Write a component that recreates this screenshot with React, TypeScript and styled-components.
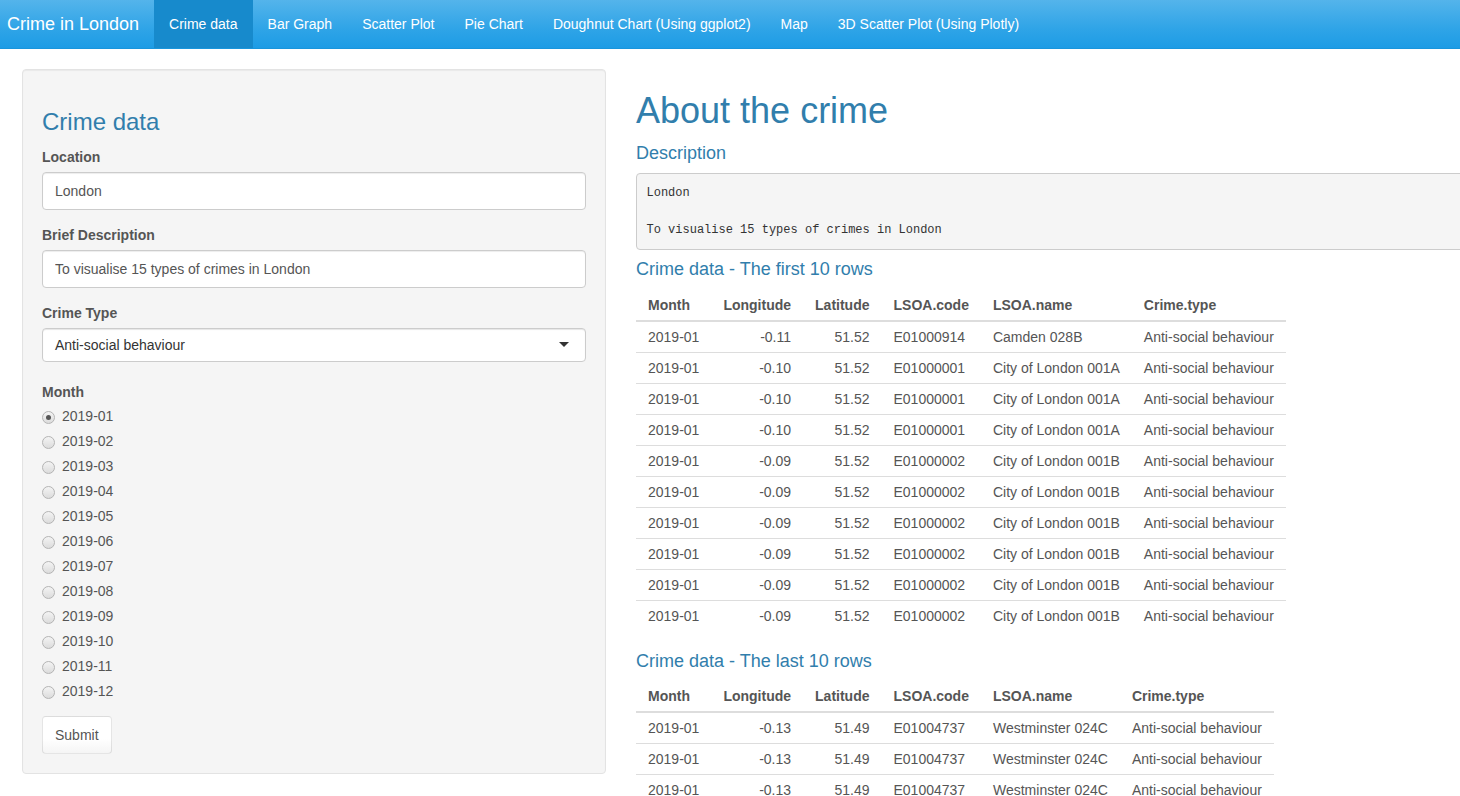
import React from "react";
import styled, { createGlobalStyle } from "styled-components";

const Global = createGlobalStyle`
  html, body { margin: 0; padding: 0; overflow: hidden; background: #fff; }
  body {
    font-family: "Liberation Sans", Arial, Helvetica, sans-serif;
    font-size: 14px;
    line-height: 1.428571;
    color: #555555;
  }
  * { box-sizing: border-box; }
`;

const Navbar = styled.nav`
  display: flex;
  align-items: stretch;
  height: 49px;
  background-image: linear-gradient(#54b4eb, #2fa4e7 60%, #1d9ce5);
  border-bottom: 1px solid #1995dc;
  margin-bottom: 20px;
  white-space: nowrap;
`;

const Brand = styled.a`
  display: block;
  padding: 0 15px 0 7px;
  line-height: 48px;
  font-size: 18px;
  color: #fff;
  text-decoration: none;
`;

const NavList = styled.ul`
  display: flex;
  list-style: none;
  margin: 0;
  padding: 0;
`;

const NavLink = styled.a<{ $active?: boolean }>`
  display: block;
  padding: 0 15px;
  line-height: 48px;
  color: #fff;
  text-decoration: none;
  background: ${(p) => (p.$active ? "#178acc" : "transparent")};
`;

const Row = styled.div`
  display: flex;
  padding-left: 7px;
  width: 1860px;
`;

const SideCol = styled.div`
  flex: 0 0 614px;
  padding: 0 15px;
`;

const MainCol = styled.div`
  flex: 0 0 1226px;
  padding: 0 15px;
`;

const Well = styled.div`
  background: #f5f5f5;
  border: 1px solid #e3e3e3;
  border-radius: 4px;
  box-shadow: inset 0 1px 1px rgba(0, 0, 0, 0.05);
  padding: 19px;
  width: 584px;
`;

const H1 = styled.h1`
  font-size: 36px;
  font-weight: 500;
  line-height: 1.1;
  color: #317eac;
  margin: 22px 0 13px;
`;

const H3 = styled.h3`
  font-size: 24px;
  font-weight: 500;
  line-height: 1.1;
  color: #317eac;
  margin: 20px 0 10px;
`;

const H4 = styled.h4`
  font-size: 18px;
  font-weight: 500;
  line-height: 1.1;
  color: #317eac;
  margin: 10px 0;
`;

const FormGroup = styled.div<{ $mb?: number }>`
  margin-bottom: ${(p) => (p.$mb ?? 13)}px;
`;

const Label = styled.label`
  display: block;
  font-weight: bold;
  line-height: 20px;
  padding-top: 2px;
  margin-bottom: 5px;
  color: #555;
`;

const TextInput = styled.input`
  display: block;
  width: 100%;
  height: 38px;
  padding: 8px 12px;
  font-family: inherit;
  font-size: 14px;
  color: #555;
  background: #fff;
  border: 1px solid #ccc;
  border-radius: 4px;
  box-shadow: inset 0 1px 1px rgba(0, 0, 0, 0.075);
  outline: none;
`;

const SelectBox = styled.div`
  position: relative;
  height: 34px;
  padding: 0 12px;
  line-height: 32px;
  color: #333;
  background: #fff;
  border: 1px solid #ccc;
  border-radius: 4px;
  box-shadow: inset 0 1px 1px rgba(0, 0, 0, 0.1);
  margin-bottom: 18px;
`;

const Caret = styled.span`
  position: absolute;
  right: 16px;
  top: 50%;
  margin-top: -3px;
  width: 0;
  height: 0;
  border-style: solid;
  border-width: 5px 5px 0 5px;
  border-color: #333 transparent transparent transparent;
`;

const RadioList = styled.div`
  display: flex;
  flex-direction: column;
  gap: 5px;
  margin-top: 2px;
`;

const RadioRow = styled.label`
  display: flex;
  align-items: center;
  height: 20px;
  color: #555;
`;

const RadioDot = styled.span<{ $checked?: boolean }>`
  position: relative;
  width: 13px;
  height: 13px;
  margin-right: 7px;
  border-radius: 50%;
  border: 1px solid #b4b4b4;
  background: linear-gradient(#f4f4f4, #dcdcdc);
  &::after {
    content: "";
    display: ${(p) => (p.$checked ? "block" : "none")};
    position: absolute;
    left: 3px;
    top: 3px;
    width: 5px;
    height: 5px;
    border-radius: 50%;
    background: #555;
  }
`;

const Button = styled.button`
  display: inline-block;
  height: 38px;
  padding: 8px 12px;
  font-family: inherit;
  font-size: 14px;
  line-height: 20px;
  color: #555;
  background-image: linear-gradient(#fff, #fff 60%, #f5f5f5);
  border: 1px solid rgba(0, 0, 0, 0.1);
  border-radius: 4px;
`;

const Pre = styled.pre`
  margin: 0 0 10px;
  padding: 9.5px;
  font-family: "Liberation Mono", "Courier New", monospace;
  font-size: 12px;
  line-height: 18.5px;
  color: #333;
  background: #f5f5f5;
  border: 1px solid #ccc;
  border-radius: 4px;
  white-space: pre-wrap;
`;

const Table = styled.table`
  border-collapse: collapse;
  border-spacing: 0;
  margin-bottom: 21px;
  white-space: nowrap;
`;

const Th = styled.th<{ $num?: boolean }>`
  padding: 5px 12px;
  line-height: 20px;
  font-weight: bold;
  color: #555;
  text-align: ${(p) => (p.$num ? "right" : "left")};
  border-bottom: 2px solid #ddd;
`;

const Td = styled.td<{ $num?: boolean }>`
  padding: 5px 12px;
  line-height: 20px;
  color: #555;
  text-align: ${(p) => (p.$num ? "right" : "left")};
  border-top: 1px solid #ddd;
`;

type Rec = [string, string, string, string, string, string];

const first: Rec[] = [
  ["2019-01", "-0.11", "51.52", "E01000914", "Camden 028B", "Anti-social behaviour"],
  ["2019-01", "-0.10", "51.52", "E01000001", "City of London 001A", "Anti-social behaviour"],
  ["2019-01", "-0.10", "51.52", "E01000001", "City of London 001A", "Anti-social behaviour"],
  ["2019-01", "-0.10", "51.52", "E01000001", "City of London 001A", "Anti-social behaviour"],
  ["2019-01", "-0.09", "51.52", "E01000002", "City of London 001B", "Anti-social behaviour"],
  ["2019-01", "-0.09", "51.52", "E01000002", "City of London 001B", "Anti-social behaviour"],
  ["2019-01", "-0.09", "51.52", "E01000002", "City of London 001B", "Anti-social behaviour"],
  ["2019-01", "-0.09", "51.52", "E01000002", "City of London 001B", "Anti-social behaviour"],
  ["2019-01", "-0.09", "51.52", "E01000002", "City of London 001B", "Anti-social behaviour"],
  ["2019-01", "-0.09", "51.52", "E01000002", "City of London 001B", "Anti-social behaviour"],
];

const last: Rec[] = [
  ["2019-01", "-0.13", "51.49", "E01004737", "Westminster 024C", "Anti-social behaviour"],
  ["2019-01", "-0.13", "51.49", "E01004737", "Westminster 024C", "Anti-social behaviour"],
  ["2019-01", "-0.13", "51.49", "E01004737", "Westminster 024C", "Anti-social behaviour"],
];

const headers = ["Month", "Longitude", "Latitude", "LSOA.code", "LSOA.name", "Crime.type"];
const numCols = [false, true, true, false, false, false];

const DataTable = ({ rows }: { rows: Rec[] }) => (
  <Table>
    <thead>
      <tr>
        {headers.map((h, i) => (
          <Th key={h} $num={numCols[i]}>
            {h}
          </Th>
        ))}
      </tr>
    </thead>
    <tbody>
      {rows.map((r, ri) => (
        <tr key={ri}>
          {r.map((c, ci) => (
            <Td key={ci} $num={numCols[ci]}>
              {c}
            </Td>
          ))}
        </tr>
      ))}
    </tbody>
  </Table>
);

const tabs = [
  "Crime data",
  "Bar Graph",
  "Scatter Plot",
  "Pie Chart",
  "Doughnut Chart (Using ggplot2)",
  "Map",
  "3D Scatter Plot (Using Plotly)",
];

const months = Array.from({ length: 12 }, (_, i) => `2019-${String(i + 1).padStart(2, "0")}`);

export default function App() {
  return (
    <>
      <Global />
      <Navbar>
        <Brand>Crime in London</Brand>
        <NavList>
          {tabs.map((t, i) => (
            <li key={t}>
              <NavLink $active={i === 0}>{t}</NavLink>
            </li>
          ))}
        </NavList>
      </Navbar>
      <Row>
        <SideCol>
          <Well>
            <H3>Crime data</H3>
            <FormGroup>
              <Label>Location</Label>
              <TextInput defaultValue="London" />
            </FormGroup>
            <FormGroup>
              <Label>Brief Description</Label>
              <TextInput defaultValue="To visualise 15 types of crimes in London" />
            </FormGroup>
            <FormGroup $mb={0}>
              <Label>Crime Type</Label>
              <SelectBox>
                Anti-social behaviour
                <Caret />
              </SelectBox>
            </FormGroup>
            <FormGroup $mb={14}>
              <Label>Month</Label>
              <RadioList>
                {months.map((m, i) => (
                  <RadioRow key={m}>
                    <RadioDot $checked={i === 0} />
                    {m}
                  </RadioRow>
                ))}
              </RadioList>
            </FormGroup>
            <Button>Submit</Button>
          </Well>
        </SideCol>
        <MainCol>
          <H1>About the crime</H1>
          <H4>Description</H4>
          <Pre>{"London\n\nTo visualise 15 types of crimes in London"}</Pre>
          <H4>Crime data - The first 10 rows</H4>
          <DataTable rows={first} />
          <H4>Crime data - The last 10 rows</H4>
          <DataTable rows={last} />
        </MainCol>
      </Row>
    </>
  );
}
